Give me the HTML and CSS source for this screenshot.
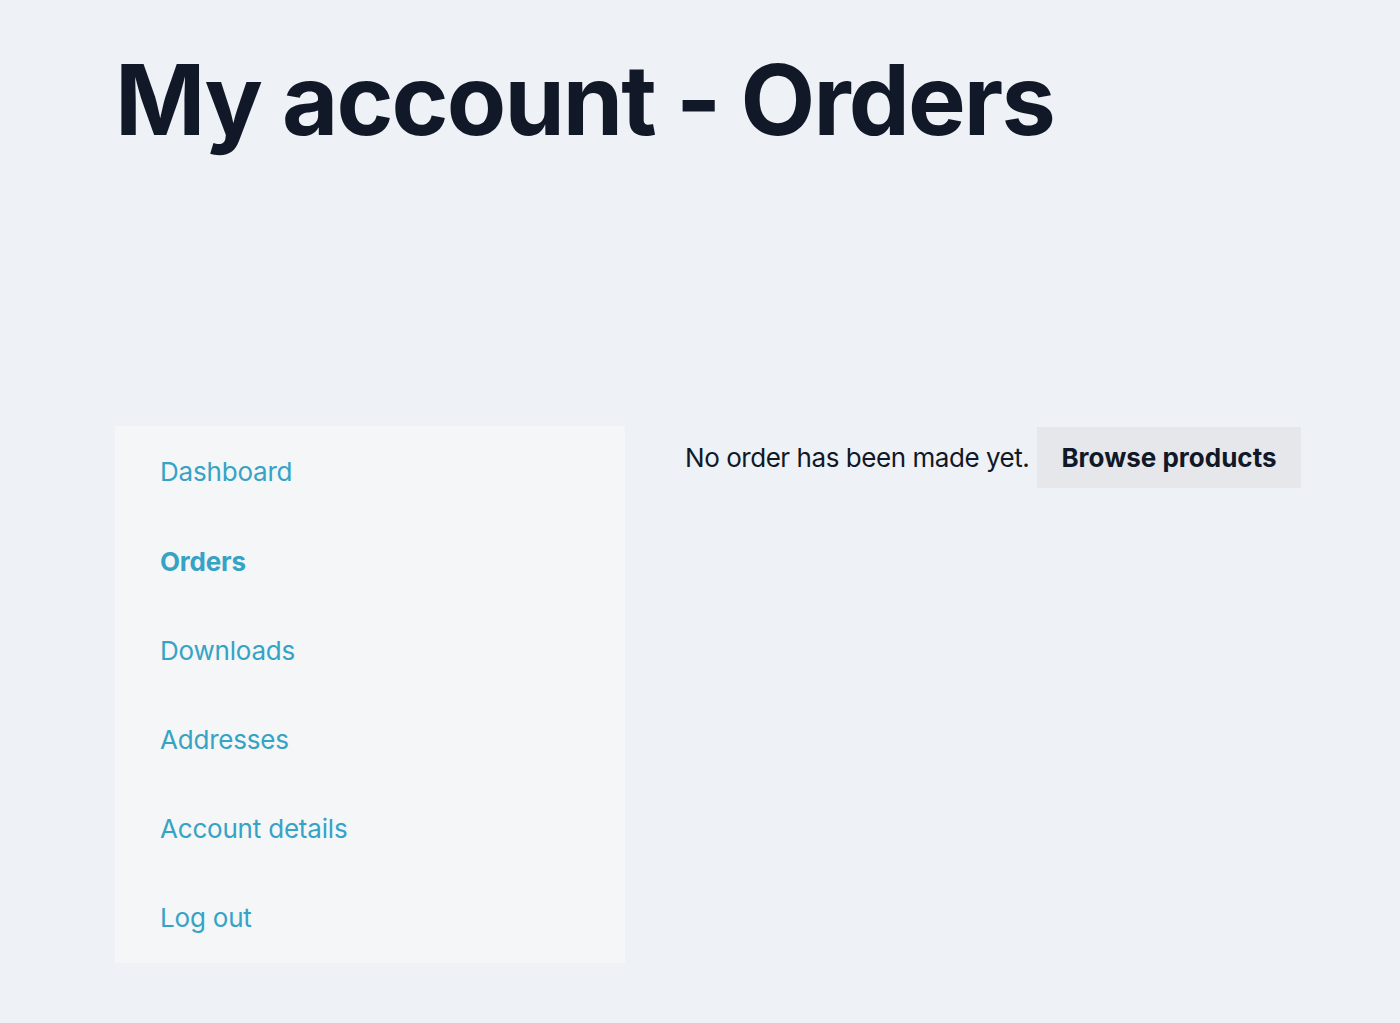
FILE: index.html
```html
<!DOCTYPE html>
<html lang="en">
<head>
<meta charset="utf-8">
<title>My account - Orders</title>
<link rel="stylesheet" href="styles.css">
</head>
<body>
<div class="page">
  <h1 class="title">My account - Orders</h1>
  <div class="account">
    <nav class="account-nav">
      <a class="nav-link" href="#">Dashboard</a>
      <a class="nav-link active" href="#">Orders</a>
      <a class="nav-link" href="#">Downloads</a>
      <a class="nav-link" href="#">Addresses</a>
      <a class="nav-link" href="#">Account details</a>
      <a class="nav-link" href="#">Log out</a>
    </nav>
    <div class="account-content">
      <div class="notice">
        <span class="notice-text">No order has been made yet.</span>
        <a class="button" href="#">Browse products</a>
      </div>
    </div>
  </div>
</div>
</body>
</html>
```

FILE: styles.css
```css
* { box-sizing: border-box; }
html, body { margin: 0; padding: 0; }
body {
  background: #eef1f5;
  font-family: Inter, "Noto Sans", "Liberation Sans", sans-serif;
  color: #111827;
}
.page {
  padding: 42px 100px 0 115px;
}
.title {
  margin: 0;
  font-size: 97px;
  font-weight: 700;
  line-height: 1.2;
  letter-spacing: -1.9px;
  color: #111827;
}
.account {
  display: flex;
  align-items: flex-start;
  gap: 60px;
  margin-top: 268px;
}
.account-nav {
  width: 510px;
  flex: none;
  background: #f4f6f8;
  display: flex;
  flex-direction: column;
  padding: 1px 0 0;
}
.nav-link {
  display: block;
  padding: 27px 45px;
  font-size: 26px;
  letter-spacing: -0.2px;
  line-height: 35.2px;
  color: #36a3c5;
  text-decoration: none;
}
.nav-link.active { font-weight: 700; }
.account-content { flex: 1; padding-top: 1px; }
.notice {
  display: flex;
  align-items: center;
  gap: 8px;
  font-size: 26px;
  white-space: nowrap;
}
.notice-text { color: #111827; letter-spacing: -0.45px; }
.button {
  display: inline-block;
  background: #e5e7ea;
  color: #111827;
  font-weight: 700;
  text-decoration: none;
  padding: 13px 24px;
  line-height: 35px;
  letter-spacing: 0;
}
```
